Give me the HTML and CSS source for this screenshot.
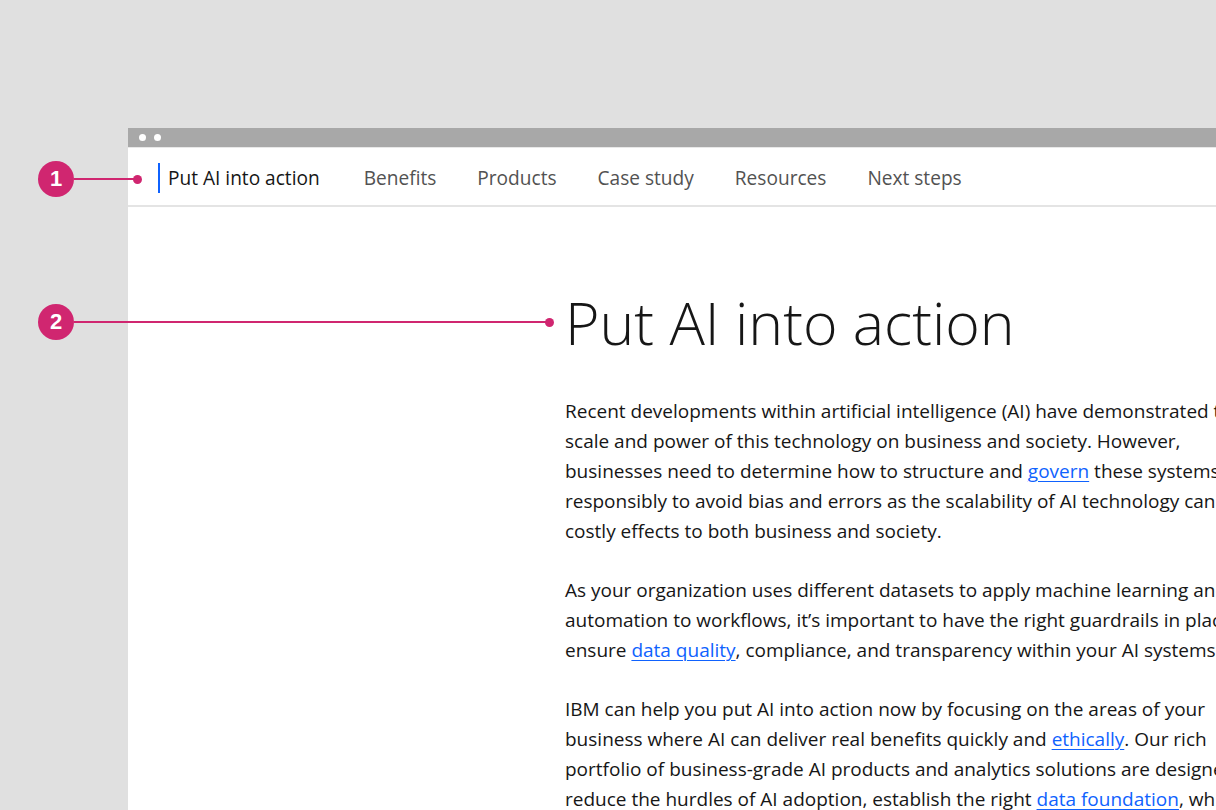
FILE: index.html
```html
<!DOCTYPE html>
<html lang="en">
<head>
<meta charset="utf-8">
<title>Put AI into action</title>
<link rel="stylesheet" href="styles.css">
</head>
<body>
<div class="stage">
  <div class="window">
    <div class="titlebar">
      <span class="dot"></span>
      <span class="dot"></span>
    </div>
    <nav class="toc">
      <a class="toc-item active" href="#">Put AI into action</a>
      <a class="toc-item" href="#">Benefits</a>
      <a class="toc-item" href="#">Products</a>
      <a class="toc-item" href="#">Case study</a>
      <a class="toc-item" href="#">Resources</a>
      <a class="toc-item" href="#">Next steps</a>
    </nav>
    <main class="content">
      <h1 class="title">Put AI into action</h1>
      <p class="para">Recent developments within artificial intelligence (AI) have demonstrated the<br>scale and power of this technology on business and society. However,<br>businesses need to determine how to structure and <a href="#">govern</a> these systems<br>responsibly to avoid bias and errors as the scalability of AI technology can have<br>costly effects to both business and society.</p>
      <p class="para">As your organization uses different datasets to apply machine learning and<br>automation to workflows, it’s important to have the right guardrails in place to<br>ensure <a href="#">data quality</a>, compliance, and transparency within your AI systems.</p>
      <p class="para">IBM can help you put AI into action now by focusing on the areas of your<br>business where AI can deliver real benefits quickly and <a href="#">ethically</a>. Our rich<br>portfolio of business-grade AI products and analytics solutions are designed to<br>reduce the hurdles of AI adoption, establish the right <a href="#">data foundation</a>, while</p>
    </main>
  </div>

  <div class="callout callout-1">
    <span class="badge">1</span>
    <span class="leader leader-1"></span>
    <span class="pin"></span>
  </div>
  <div class="callout callout-2">
    <span class="badge">2</span>
    <span class="leader leader-2"></span>
    <span class="pin"></span>
  </div>
</div>
</body>
</html>
```
FILE: styles.css
```css
* { box-sizing: border-box; }

html, body {
  margin: 0;
  padding: 0;
  height: 100%;
  overflow: hidden;
  background: #e0e0e0;
}

body {
  font-family: "Open Sans", "Noto Sans", sans-serif;
  color: #161616;
}

.stage {
  position: relative;
  width: 1216px;
  height: 810px;
  padding: 128px 0 0 128px;
  overflow: hidden;
}

.window {
  width: 1300px;
  min-height: 900px;
  background: #ffffff;
  display: flex;
  flex-direction: column;
}

.titlebar {
  height: 20px;
  background: #a8a8a8;
  display: flex;
  align-items: center;
  gap: 8px;
  padding-left: 11px;
  border-bottom: 1px solid #e8e8e8;
}

.dot {
  width: 7px;
  height: 7px;
  border-radius: 50%;
  background: #ffffff;
}

.toc {
  height: 59px;
  display: flex;
  align-items: center;
  gap: 41px;
  padding: 2px 0 0 30px;
  border-bottom: 2px solid #e4e4e4;
}

.toc-item {
  font-size: 19.1px;
  color: #525252;
  text-decoration: none;
  line-height: 30px;
  white-space: nowrap;
}

.toc-item.active {
  color: #161616;
  border-left: 2px solid #0f62fe;
  padding-left: 8px;
  margin-right: 3px;
}

.content {
  padding: 79px 0 0 437px;
}

.title {
  margin: 0;
  font-size: 59px;
  font-weight: 300;
  line-height: 72px;
  color: #161616;
  white-space: nowrap;
}

.para {
  margin: 38px 0 0;
  font-size: 19px;
  line-height: 30px;
  white-space: nowrap;
  color: #161616;
}

.para + .para {
  margin-top: 29px;
}

.para a {
  color: #0f62fe;
  text-decoration: underline;
  text-underline-offset: 3px;
  text-decoration-thickness: 1px;
}

/* annotation callouts */
.callout {
  position: absolute;
  left: 38px;
  display: flex;
  align-items: center;
  height: 36px;
}

.callout-1 { top: 161px; }
.callout-2 { top: 304px; }

.badge {
  width: 36px;
  height: 36px;
  border-radius: 50%;
  background: #d02670;
  color: #ffffff;
  font-family: "Liberation Sans", Arial, sans-serif;
  font-weight: 700;
  font-size: 22px;
  display: flex;
  align-items: center;
  justify-content: center;
  flex: none;
}

.leader {
  height: 2px;
  background: #d02670;
  flex: none;
}

.leader-1 { width: 61px; }
.leader-2 { width: 473px; }

.pin {
  width: 9px;
  height: 9px;
  border-radius: 50%;
  background: #d02670;
  margin-left: -2px;
  flex: none;
}
```
